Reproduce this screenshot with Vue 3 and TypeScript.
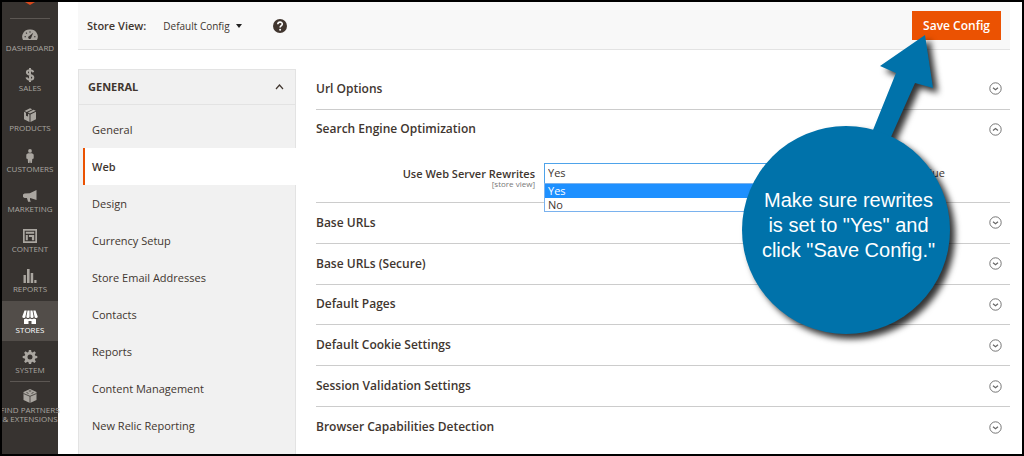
<script setup lang="ts">
import { ref } from 'vue'

interface NavItem { id: string; label: string }

const nav: NavItem[] = [
  { id: 'dashboard', label: 'Dashboard' },
  { id: 'sales', label: 'Sales' },
  { id: 'products', label: 'Products' },
  { id: 'customers', label: 'Customers' },
  { id: 'marketing', label: 'Marketing' },
  { id: 'content', label: 'Content' },
  { id: 'reports', label: 'Reports' },
  { id: 'stores', label: 'Stores' },
  { id: 'system', label: 'System' },
]

const tabs = [
  'General', 'Web', 'Design', 'Currency Setup', 'Store Email Addresses',
  'Contacts', 'Reports', 'Content Management', 'New Relic Reporting',
]
const activeTab = ref('Web')

const sections = [
  'Url Options', 'Search Engine Optimization', 'Base URLs', 'Base URLs (Secure)',
  'Default Pages', 'Default Cookie Settings', 'Session Validation Settings',
  'Browser Capabilities Detection',
]
const openSection = 'Search Engine Optimization'
const rewrites = ref('Yes')
const useSystem = ref(false)
</script>

<template>
  <div class="frame">
    <aside class="sidebar">
      <a href="#" class="logo" aria-label="Home">
        <svg width="12" height="3" viewBox="0 0 12 3"><path d="M1 0h10L6 3z" fill="#d9481c" /></svg>
      </a>
      <nav class="menu" aria-label="Main">
        <a
          v-for="item in nav"
          :key="item.id"
          href="#"
          class="menu-item"
          :class="{ current: item.id === 'stores' }"
        >
          <svg class="icon" viewBox="0 0 16 14" fill="currentColor" aria-hidden="true">
            <template v-if="item.id === 'dashboard'">
              <path fill-rule="evenodd" d="M8 1.5A7.2 7.2 0 0 0 1 12h14A7.2 7.2 0 0 0 8 1.5zM7 10.8A1.5 1.5 0 0 1 7.3 8L11.200 4.700 9.300 9.500A1.500 1.500 0 0 1 7 10.800zM4 8.200h-1.500v1H4zM5.300 5.300l-1-1-.7.7 1 1zM8.500 3.200h-1v1.500h1zM13.500 8.200H12v1h1.500z" />
            </template>
            <template v-else-if="item.id === 'sales'">
              <path d="M8 0v14M11.200 4.300C10.900 2.900 9.700 2.300 8 2.300S4.900 3.200 4.900 4.600C4.900 7.800 11.300 6.200 11.300 9.400 11.300 10.900 9.900 11.700 8 11.700S4.800 10.900 4.500 9.400" fill="none" stroke="currentColor" stroke-width="2" />
            </template>
            <template v-else-if="item.id === 'products'">
              <path d="M8 .3l2.300.9-5.600 2.700L2.500 3zM11.500 1.700l2.300 1L8 5.500 5.900 4.500zM2 3.800l2 .9v3l2 .9V5.700l1.500.7V14L2 11.200zM14 3.800v7.400L8.500 14V6.400z" />
            </template>
            <template v-else-if="item.id === 'customers'">
              <circle cx="8" cy="1.900" r="1.900" />
              <path d="M6 4.200h4l1.700 1.300v4l-1.400.5L9.900 14H8.400L8 11l-.4 3H6.100l-.4-4-1.400-.5v-4z" />
            </template>
            <template v-else-if="item.id === 'marketing'">
              <path d="M14.500 1v10L9 9.200 8 9v1.800l.7 2H6.100L4.900 8.900H2.500L1 8V5.500l1.500-.9 5.300-.3z" />
            </template>
            <template v-else-if="item.id === 'content'">
              <path fill-rule="evenodd" d="M1 0h14v14H1zM2.700 1.700v10.600h10.600V1.700z" />
              <path d="M3.800 2.800h8.400v2H3.800zM3.800 5.900h2v5.300h-2zM6.900 5.900h5.300v5.300h-2.300V8H6.900z" />
            </template>
            <template v-else-if="item.id === 'reports'">
              <path d="M1.500 6h2.400v8H1.500zM5 0h2.600v14H5zM8.700 4h2.500v10H8.700zM12.300 11h2.200v3h-2.200z" />
            </template>
            <template v-else-if="item.id === 'stores'">
              <path d="M2.500.5h2.200L3.500 6.500a1.600 1.600 0 0 1-3.200 0zM5.500.5h2.100v6a1.600 1.600 0 0 1-3.200 0zM8.400.5h2.100l1.100 6a1.600 1.600 0 0 1-3.200 0zM11.300.5h2.200l2.200 6a1.600 1.600 0 0 1-3.200 0z" />
              <path d="M2 9.200l2-.7 2 .7 2-.7 2 .7 2-.7 2 .7V14H9.500v-3h-3v3H2z" />
            </template>
            <template v-else>
              <path fill-rule="evenodd" d="M6.900 0h2.200l.4 2 1.200.5L12.400 1.300 13.900 2.800 12.800 4.500l.5 1.300 2 .3v2l-2 .4-.5 1.200 1.100 1.700-1.500 1.500-1.700-1.100-1.200.5-.4 1.700H6.900l-.4-1.700-1.200-.5-1.700 1.100-1.500-1.500 1.100-1.700-.5-1.200-2-.4v-2l2-.3.500-1.300L2.100 2.800 3.600 1.300l1.700 1.200L6.500 2zM8 4.600a2.500 2.500 0 1 0 0 5 2.500 2.500 0 0 0 0-5z" />
            </template>
          </svg>
          <span>{{ item.label }}</span>
        </a>
      </nav>
      <a href="#" class="partners">
        <svg class="icon" viewBox="0 0 16 14" aria-hidden="true">
          <path d="M8 0l6.500 3v8L8 14l-6.500-3V3z" fill="currentColor" />
          <path d="M1.500 4.500L8 7.300l6.500-2.800M8 7.300V14M4.500 3.500l2 .9M9.500 4.400l2-.9M6.800 2l2.400.0" fill="none" stroke="#373330" stroke-width="0.800" />
        </svg>
        <span>Find Partners<br>&amp; Extensions</span>
      </a>
    </aside>

    <main class="page">
      <header class="toolbar">
        <span class="scope-label">Store View:</span>
        <button type="button" class="scope">
          Default Config
          <svg width="6" height="4" viewBox="0 0 6 4" aria-hidden="true"><path d="M0 0h6L3 4z" fill="#222" /></svg>
        </button>
        <button type="button" class="help" aria-label="Help">
          <svg width="14" height="14" viewBox="0 0 14 14" aria-hidden="true">
            <circle cx="7" cy="7" r="7" fill="#41362f" />
            <path d="M4.800 5.300C4.900 2.400 9.300 2.500 9.300 5 9.300 6.700 7.100 6.600 7.100 8.600" fill="none" stroke="#fff" stroke-width="1.600" />
            <circle cx="7.100" cy="10.700" r="1" fill="#fff" />
          </svg>
        </button>
        <button type="button" class="save">Save Config</button>
      </header>

      <div class="columns">
        <nav class="tabs" aria-label="Configuration">
          <button type="button" class="tabs-title" aria-expanded="true">
            General
            <svg width="9" height="6" viewBox="0 0 9 6" aria-hidden="true"><path d="M1 5l3.500-4L8 5" fill="none" stroke="#41362f" stroke-width="1.200" /></svg>
          </button>
          <div class="tabs-list">
            <a
              v-for="tab in tabs"
              :key="tab"
              href="#"
              class="tab"
              :class="{ active: tab === activeTab }"
              @click.prevent="activeTab = tab"
            >{{ tab }}</a>
          </div>
        </nav>

        <div class="sections">
          <section v-for="name in sections" :key="name" class="section">
            <button type="button" class="section-title" :aria-expanded="name === openSection">
              {{ name }}
              <svg width="13" height="13" viewBox="0 0 13 13" fill="none" stroke="#666" aria-hidden="true">
                <circle cx="6.500" cy="6.500" r="5.700" stroke-width="0.900" />
                <path :d="name === openSection ? 'M4 7.500l2.500-2 2.500 2' : 'M4 5.700l2.500 2 2.500-2'" stroke-width="1.200" />
              </svg>
            </button>
            <div v-if="name === openSection" class="field">
              <label class="field-label" for="rewrites">
                Use Web Server Rewrites
                <small>[store view]</small>
              </label>
              <div class="picker">
                <select id="rewrites" v-model="rewrites">
                  <option>Yes</option>
                  <option>No</option>
                </select>
                <ul class="options" role="listbox" aria-label="Use Web Server Rewrites">
                  <li role="option" aria-selected="true" class="chosen">Yes</li>
                  <li role="option" aria-selected="false">No</li>
                </ul>
              </div>
              <label class="system"><input v-model="useSystem" type="checkbox"> Use system value</label>
            </div>
          </section>
        </div>
      </div>
    </main>

    <div class="callout">
      <svg class="callout-shape" width="220" height="312" viewBox="0 0 220 312" aria-hidden="true">
        <path d="M184 4L139 35l16 7-23 57v20h18v-13l24-54 18 5z" fill="#0072aa" />
        <circle cx="105" cy="199" r="104" fill="#0072aa" />
      </svg>
      <p>Make sure rewrites<br>is set to "Yes" and<br>click "Save Config."</p>
    </div>
  </div>
</template>

<style>
html, body { margin: 0; background: #fff; }
</style>

<style scoped>
* { box-sizing: border-box; }
button { padding: 0; border: 0; background: none; color: inherit; font: inherit; }
a { color: inherit; text-decoration: none; }

.frame {
  position: relative;
  display: flex;
  height: 100vh;
  overflow: hidden;
  border: 2px solid #000;
  background: #fff;
  color: #41362f;
  font: 11px/16px "Open Sans", "Noto Sans", sans-serif;
}

.sidebar {
  display: flex;
  flex: none;
  flex-direction: column;
  width: 56px;
  background: #373330;
  color: #aaa6a0;
  font-size: 8px;
  line-height: 9px;
  text-align: center;
  text-transform: uppercase;
}
.logo {
  display: flex;
  justify-content: center;
  height: 17px;
  margin: 0 8px;
  border-bottom: 1px solid #5c5753;
}
.menu { display: flex; flex: 1; flex-direction: column; }
.menu-item {
  display: flex;
  flex: 1;
  flex-direction: column;
  align-items: center;
  gap: 1px;
  padding-top: 9px;
}
.menu-item.current { background: #524d49; color: #fff; }
.icon { display: block; flex: none; width: 16px; height: 14px; }
.partners {
  display: flex;
  flex-direction: column;
  align-items: center;
  gap: 2px;
  height: 73px;
  padding-top: 7px;
  white-space: nowrap;
}
.partners::before {
  width: 40px;
  margin-top: -7px;
  margin-bottom: 5px;
  border-top: 1px solid #5c5753;
  content: "";
}

.page { flex: 1; min-width: 0; padding: 0 12px 0 20px; }
.toolbar {
  display: flex;
  align-items: center;
  height: 48px;
  padding: 0 9px;
  border-bottom: 1px solid #e3e3e3;
  background: #f8f8f8;
}
.scope-label { font-weight: 600; }
.scope { display: flex; align-items: center; gap: 6px; margin-left: 17px; font-size: 10px; }
.help { display: flex; margin-left: 31px; }
.save {
  height: 29px;
  margin-left: auto;
  padding: 0 11px;
  background: #eb5202;
  color: #fff;
  font-size: 12px;
  font-weight: 600;
}

.columns { display: flex; gap: 20px; height: calc(100vh - 52px); padding-top: 19px; }
.tabs { flex: none; width: 218px; border: 1px solid #e3e3e3; border-bottom: 0; background: #f1f1f1; }
.tabs-title {
  display: flex;
  align-items: center;
  justify-content: space-between;
  width: 100%;
  height: 35px;
  padding: 0 11px 0 9px;
  border-bottom: 1px solid #e3e3e3;
  font-weight: 700;
  text-transform: uppercase;
}
.tabs-list { display: flex; flex-direction: column; padding: 6px 0 0 4px; }
.tab { height: 37px; padding-left: 9px; line-height: 37px; }
.tab.active {
  margin-right: -1px;
  padding-left: 7px;
  border-left: 2px solid #eb5202;
  background: #fff;
  font-weight: 600;
}

.sections { display: flex; flex: 1; flex-direction: column; min-width: 0; margin-bottom: 7px; }
.section { display: flex; flex: 1 1 0; flex-direction: column; border-bottom: 1px solid #ccc; }
.section:has(.field) { flex-basis: 53px; }
.section:last-child { border-bottom: 0; }
.section-title {
  display: flex;
  flex: 1;
  align-items: center;
  justify-content: space-between;
  width: 100%;
  padding-right: 8px;
  font-size: 12px;
  font-weight: 600;
  text-align: left;
}
.field { display: flex; height: 53px; padding-top: 14px; }
.field-label {
  display: flex;
  flex-direction: column;
  width: 219px;
  padding-top: 4px;
  font-weight: 600;
  line-height: 13px;
  text-align: right;
}
.field-label small { color: #777; font-size: 8px; font-weight: 400; line-height: 8px; }
.picker { position: relative; width: 290px; margin-left: 9px; }
.picker select {
  width: 100%;
  height: 21px;
  padding: 0 3px;
  border: 1px solid #4ea3ea;
  border-radius: 0;
  appearance: none;
  background: #fff;
  color: inherit;
  font: inherit;
}
.options {
  position: absolute;
  z-index: 1;
  top: 20px;
  left: 0;
  width: 100%;
  margin: 0;
  padding: 0;
  border: 1px solid #7ab2ee;
  background: #fff;
  line-height: 13px;
  list-style: none;
}
.options li { padding: 0 3px; }
.options .chosen { background: #1e90ff; color: #fff; line-height: 14px; }
.system { display: flex; align-items: flex-start; gap: 4px; margin-left: auto; padding: 2px 65px 0 0; white-space: nowrap; }
.system input { margin: 2px 0 0; }

.callout { position: absolute; z-index: 2; top: 29px; right: 61px; width: 220px; height: 312px; pointer-events: none; }
.callout-shape { display: block; overflow: visible; filter: drop-shadow(5px 5px 3px #000c); }
.callout p {
  position: absolute;
  top: 157px;
  left: 0;
  width: 215px;
  margin: 0;
  color: #fff;
  font: 20px/25px "Liberation Sans", Arial, sans-serif;
  text-align: center;
}
</style>
